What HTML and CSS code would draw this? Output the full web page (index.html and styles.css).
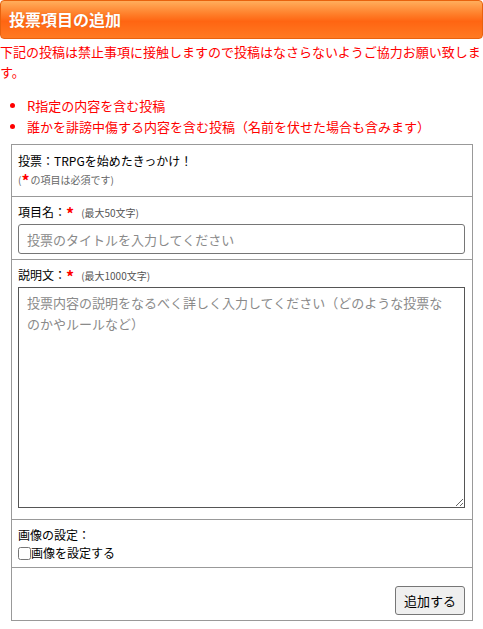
FILE: index.html
```html
<!DOCTYPE html>
<html lang="ja">
<head>
  <meta charset="UTF-8" />
  <meta name="viewport" content="width=device-width, initial-scale=1.0"/>
  <title>投票項目の追加</title>
  <link rel="stylesheet" href="styles.css">
</head>
<body>
  <h2 class="page-title">投票項目の追加</h2>

  <p class="notice">下記の投稿は禁止事項に接触しますので投稿はなさらないようご協力お願い致します。</p>
  <ul class="rules">
    <li>R指定の内容を含む投稿</li>
    <li>誰かを誹謗中傷する内容を含む投稿（名前を伏せた場合も含みます）</li>
  </ul>

  <form class="item-form" id="itemForm">
    <div class="form-row">
      <div class="vote-name">投票：TRPGを始めたきっかけ！</div>
      <div class="required-note">(<span class="req">*</span>の項目は必須です)</div>
    </div>
    <div class="form-row">
      <label class="field-label" for="title">項目名：<span class="req">*</span><span class="limit">(最大50文字)</span></label>
      <input type="text" id="title" name="title" placeholder="投票のタイトルを入力してください" />
    </div>
    <div class="form-row">
      <label class="field-label" for="desc">説明文：<span class="req">*</span><span class="limit">(最大1000文字)</span></label>
      <textarea id="desc" name="desc" placeholder="投票内容の説明をなるべく詳しく入力してください（どのような投票なのかやルールなど）"></textarea>
    </div>
    <div class="form-row">
      <div class="field-label">画像の設定：</div>
      <label class="check-label"><input type="checkbox" id="useImage" />画像を設定する</label>
    </div>
    <div class="form-row submit-row">
      <button type="submit">追加する</button>
    </div>
  </form>
</body>
</html>
```

FILE: styles.css
```css
body {
  font-family: "Noto Sans CJK JP", "Noto Sans", sans-serif;
  margin: 0;
  color: #000;
  background: #fff;
}

.page-title {
  margin: 0;
  height: 37px;
  line-height: 37px;
  padding: 0 8px;
  font-size: 16px;
  font-weight: bold;
  color: #fff;
  border: 1px solid #e8620e;
  border-radius: 4px;
  background: linear-gradient(to bottom, #ffae5c 0%, #ff7f2a 35%, #ff6512 55%, #ff7a22 100%);
  text-shadow: 0 0 1px rgba(160, 60, 0, 0.4);
}

.notice {
  margin: 3px 0 0;
  font-size: 13px;
  line-height: 20px;
  color: #ff0000;
}

.rules {
  margin: 13px 0 0;
  padding-left: 27px;
  font-size: 13px;
  line-height: 21px;
  color: #ff0000;
}

.item-form {
  margin: 7px 10px 0 11px;
  border: 1px solid #999;
}

.form-row {
  padding: 6px 7px 5px 6px;
  border-top: 1px solid #999;
  font-size: 12px;
  line-height: 18px;
}

.form-row:first-child {
  border-top: none;
  padding-bottom: 7px;
}

.vote-name {
  line-height: 20px;
}

.required-note {
  font-size: 10px;
  color: #666;
}

.req {
  color: #ff0000;
  font-size: 16px;
  font-weight: bold;
  vertical-align: -3px;
  margin-right: 1px;
}

.limit {
  font-size: 10px;
  color: #555;
  margin-left: 6px;
}

.field-label {
  display: block;
}

input[type="text"],
textarea {
  display: block;
  width: 100%;
  box-sizing: border-box;
  font-family: inherit;
  font-size: 13px;
  border: 1px solid #767676;
  border-radius: 3px;
  padding: 4px 8px;
  color: #333;
}

input[type="text"] {
  height: 30px;
  margin-top: 2px;
}

textarea {
  height: 221px;
  margin-top: 2px;
  margin-bottom: 6px;
  padding-right: 16px;
  line-height: 21px;
  border-radius: 0;
  border-color: #555;
  resize: vertical;
}

::placeholder {
  color: #8a8a8a;
}

.check-label {
  display: flex;
  align-items: center;
}

.check-label input {
  width: 13px;
  height: 13px;
  margin: 0;
}

.submit-row {
  display: flex;
  justify-content: flex-end;
  padding-top: 18px;
}

button {
  height: 29px;
  padding: 0 8px;
  font-family: inherit;
  font-size: 13px;
  background: #efefef;
  border: 1px solid #767676;
  border-radius: 3px;
  color: #000;
  cursor: pointer;
}
```
